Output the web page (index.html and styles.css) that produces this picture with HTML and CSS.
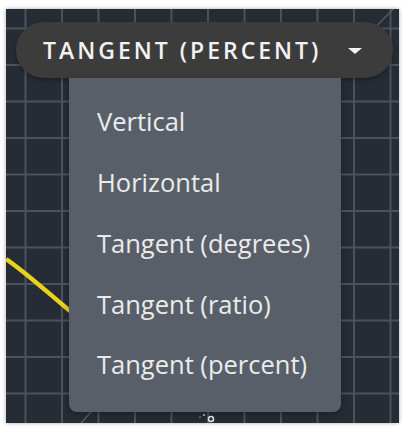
FILE: index.html
```html
<!DOCTYPE html>
<html>
<head>
<meta charset="utf-8">
<link rel="stylesheet" href="styles.css">
</head>
<body>
<div class="frame">
  <svg class="canvas-art" width="393" height="414" viewBox="0 0 393 414">
    <line x1="362" y1="26" x2="393" y2="-6" stroke="#5a616b" stroke-width="1.2"/>
    <line x1="75" y1="414" x2="95" y2="392" stroke="#5a616b" stroke-width="1.2"/>
    <path d="M0 250 C 18 262, 40 282, 64 302" stroke="#e8d21a" stroke-width="4.5" fill="none"/>
    <circle cx="205" cy="410" r="2.5" fill="none" stroke="#e6e6e6" stroke-width="1.5"/>
    <circle cx="198" cy="406" r="1" fill="#cfcfcf"/>
    <circle cx="194" cy="408" r="0.8" fill="#9a9a9a"/>
  </svg>
  <div class="pill">
    <span class="pill-label">TANGENT (PERCENT)</span>
    <span class="caret"></span>
  </div>
  <ul class="menu">
    <li class="item">Vertical</li>
    <li class="item">Horizontal</li>
    <li class="item">Tangent (degrees)</li>
    <li class="item">Tangent (ratio)</li>
    <li class="item">Tangent (percent)</li>
  </ul>
</div>
</body>
</html>
```

FILE: styles.css
```css
html, body {
  margin: 0;
  padding: 0;
  background: #ffffff;
}

body {
  width: 405px;
  height: 430px;
  overflow: hidden;
  font-family: "Open Sans", "Noto Sans", sans-serif;
}

.frame {
  position: relative;
  margin: 9px 0 0 6px;
  width: 393px;
  height: 414px;
  background-color: #262c35;
  background-image:
    linear-gradient(to right, #4b525c 0 1.5px, transparent 1.5px),
    linear-gradient(to bottom, #4b525c 0 1.5px, transparent 1.5px);
  background-size: 36.5px 36.5px;
  background-position: 18.5px 18.5px;
  box-shadow: 0 0 4px rgba(0, 0, 0, 0.35);
  overflow: hidden;
}

.canvas-art {
  position: absolute;
  left: 0;
  top: 0;
}

.pill {
  position: absolute;
  left: 10px;
  top: 13px;
  width: 377px;
  height: 56px;
  box-sizing: border-box;
  padding: 0 31px 0 27px;
  border-radius: 28px;
  background: #3d3c3c;
  display: flex;
  align-items: center;
  justify-content: space-between;
  box-shadow: 0 2px 4px rgba(0, 0, 0, 0.3);
}

.pill-label {
  color: #f2f2f2;
  font-size: 23px;
  font-weight: 600;
  letter-spacing: 3px;
}

.caret {
  width: 0;
  height: 0;
  border-left: 7px solid transparent;
  border-right: 7px solid transparent;
  border-top: 6px solid #f2f2f2;
  margin-top: 2px;
}

.menu {
  position: absolute;
  left: 63px;
  top: 69px;
  width: 272px;
  height: 334px;
  box-sizing: border-box;
  margin: 0;
  padding: 13px 0 0 0;
  list-style: none;
  background: #595f69;
  border-radius: 0 0 8px 8px;
  box-shadow: 0 2px 6px rgba(0, 0, 0, 0.3);
}

.item {
  height: 60.75px;
  display: flex;
  align-items: center;
  padding-left: 28px;
  color: #ebebeb;
  font-size: 25.5px;
  font-weight: 400;
}
```
